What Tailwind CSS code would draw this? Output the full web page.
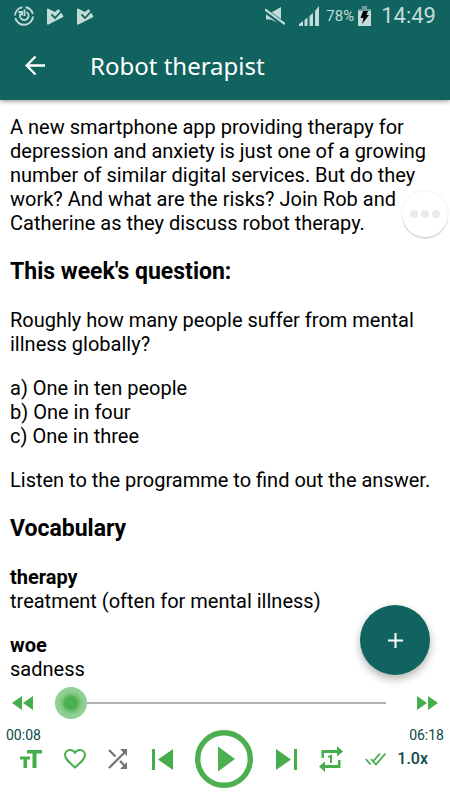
<!DOCTYPE html>
<html lang="en">
<head>
    <meta charset="UTF-8">
    <meta name="viewport" content="width=device-width, initial-scale=1.0">
    <title>Robot therapist</title>
    <script src="https://cdn.jsdelivr.net/npm/@tailwindcss/browser@4"></script>
</head>
<body class="relative flex h-screen flex-col overflow-hidden bg-white font-['Roboto',sans-serif] text-black">

    <header class="relative z-10 bg-[#11635f] pb-3 shadow-[0_1px_5px_rgba(0,0,0,0.45)]">
        <!-- Status bar -->
        <div class="flex h-8 items-center justify-between pr-[14px] pl-[14px] text-[#c3dbd8]">
            <div class="flex items-center gap-[13px]">
                <svg class="size-[20px]" viewBox="0 0 20 20" fill="none" stroke="currentColor" stroke-width="1.9">
                    <path d="M11.500 1.200A9 9 0 0 1 18.800 8M19 10.500A9 9 0 0 1 1.300 12M1 9.500A9 9 0 0 1 8.500 1.200"/>
                    <path d="M12.500 6A4.300 4.300 0 1 1 6.500 7.500M4.500 6H8v3.500M10.500 3.500V10"/>
                </svg>
                <svg class="h-[17px] w-[17px]" viewBox="0 0 17 17">
                    <path fill="currentColor" d="M0 1.500Q0 0 1.500.7L8 4l3.500-3L13 3l3 4.500Q17 8.500 15.800 9.300L1.500 16.500Q0 17 0 15.500z"/>
                    <path fill="none" stroke="#11635f" stroke-width="1.800" d="M4.500 6.500L8 10l7-7.500"/>
                </svg>
                <svg class="h-[17px] w-[17px]" viewBox="0 0 17 17">
                    <path fill="currentColor" d="M0 1.500Q0 0 1.500.7L8 4l3.500-3L13 3l3 4.500Q17 8.500 15.800 9.300L1.500 16.500Q0 17 0 15.500z"/>
                    <path fill="none" stroke="#11635f" stroke-width="1.800" d="M4.500 6.500L8 10l7-7.500"/>
                </svg>
            </div>
            <div class="flex items-center">
                <svg class="mr-[14px] h-[19px] w-[20px]" viewBox="0 0 20 19">
                    <path fill="currentColor" d="M1 6h4.500L16 0v17L5.500 12.500H1z"/>
                    <path stroke="#11635f" stroke-width="5" d="M0 3.500L20 18"/>
                    <path stroke="currentColor" stroke-width="2.200" d="M0 2.500L20 17"/>
                </svg>
                <svg class="mr-[7px] h-5 w-5" viewBox="0 0 20 20" fill="currentColor">
                    <path d="M0 20v-2l4-3v5zM5.500 20v-6l3-2.500V20zM10.500 20V10l3.500-3v13zM16 20V5l4-5v20z"/>
                </svg>
                <span class="mr-1 text-[15px]">78%</span>
                <svg class="mr-[10px] h-5 w-[13px]" viewBox="0 0 13 20">
                    <path fill="#6a9c98" d="M4 0h5v3h4v3H0V3h4z"/>
                    <path fill="currentColor" d="M0 5h13v15H0z"/>
                    <path fill="#000" d="M5 5h5L8.500 9H11L4 18l1.500-6H2.500z"/>
                </svg>
                <span class="text-[22px] leading-8">14:49</span>
            </div>
        </div>
        <!-- App bar -->
        <div class="flex h-14 items-center gap-[44px] pt-[11px] pl-[25px] text-white">
            <button type="button" aria-label="Back">
                <svg class="size-[21px]" viewBox="0 0 21 21" fill="none" stroke="currentColor" stroke-width="2.400">
                    <path d="M20 10.500H2M10.500 1.500L1.700 10.500l8.800 9"/>
                </svg>
            </button>
            <h1 class="font-['Noto_Sans',sans-serif] text-[24px] leading-8">Robot therapist</h1>
        </div>
    </header>

    <main class="flex-1 overflow-hidden px-[10px] pt-[15px] text-[20px] leading-6">
        <p>A new smartphone app providing therapy for depression and anxiety is just one of a growing number of similar digital services. But do they work? And what are the risks? Join Rob and Catherine as they discuss robot therapy.</p>
        <h2 class="mt-[21px] mb-5 text-[23px] leading-8 font-bold">This week's question:</h2>
        <p>Roughly how many people suffer from mental illness globally?</p>
        <p class="mt-5">a) One in ten people<br>b) One in four<br>c) One in three</p>
        <p class="mt-5">Listen to the programme to find out the answer.</p>
        <h2 class="mt-[21px] mb-5 text-[23px] leading-8 font-bold">Vocabulary</h2>
        <p><strong>therapy</strong><br>treatment (often for mental illness)</p>
        <p class="mt-5"><strong>woe</strong><br>sadness</p>
    </main>

    <!-- Floating buttons -->
    <button type="button" aria-label="More" class="absolute top-[191px] right-[2px] z-10 flex size-[46px] items-center justify-center gap-[3px] rounded-full bg-white shadow-[0_2px_1px_rgba(0,0,0,0.12),0_0_2px_rgba(0,0,0,0.12)]">
        <span class="size-2 rounded-full bg-[#ebebeb]"></span>
        <span class="size-2 rounded-full bg-[#ebebeb]"></span>
        <span class="size-2 rounded-full bg-[#ebebeb]"></span>
    </button>
    <button type="button" aria-label="Add" class="absolute right-5 bottom-[125px] z-10 flex size-[70px] items-center justify-center rounded-full bg-[#11635f] text-white shadow-[0_4px_9px_rgba(0,0,0,0.3)]">
        <svg class="size-[15px]" viewBox="0 0 15 15" stroke="currentColor" stroke-width="2"><path d="M7.500 0v15M0 7.500h15"/></svg>
    </button>

    <!-- Player -->
    <footer class="pb-3 text-[#45ad4c]">
        <div class="flex items-center gap-[15px] px-3">
            <button type="button" aria-label="Rewind">
                <svg class="h-[14px] w-[21px]" viewBox="0 0 21 14" fill="currentColor"><path d="M10 0v14L0 7zM21 0v14L11 7z"/></svg>
            </button>
            <input type="range" min="0" max="378" value="8" aria-label="Position" class="h-8 min-w-0 flex-1 appearance-none bg-[linear-gradient(#b2b2b2,#b2b2b2)] bg-[length:calc(100%-32px)_2px] bg-center bg-no-repeat [&::-webkit-slider-thumb]:size-8 [&::-webkit-slider-thumb]:appearance-none [&::-webkit-slider-thumb]:rounded-full [&::-webkit-slider-thumb]:bg-[radial-gradient(circle,#4caf50_0_6px,#6dbf70_8px,#8fcf92_12px)]">
            <button type="button" aria-label="Fast forward">
                <svg class="h-[14px] w-[21px]" viewBox="0 0 21 14" fill="currentColor"><path d="M0 0v14l10-7zM11 0v14l10-7z"/></svg>
            </button>
        </div>
        <div class="mt-2 flex h-4 items-center justify-between px-[6px] text-[14px] text-[#0b4a46]">
            <span>00:08</span>
            <span>06:18</span>
        </div>
        <div class="-mt-[13px] flex items-center justify-between pr-[22px] pl-5">
            <button type="button" aria-label="Text size">
                <svg class="h-[18px] w-[22px]" viewBox="0 0 22 18" fill="currentColor"><path d="M7 0h15v3.500h-5.500V18h-4V3.500H7zM0 6.500h10V9.500H7V18H3.500V9.500H0z"/></svg>
            </button>
            <button type="button" aria-label="Favourite">
                <svg class="h-5 w-[22px]" viewBox="0 0 22 20" fill="none" stroke="currentColor" stroke-width="2"><path d="M11 18.500C5 13.200 1 9.800 1 6a5 5 0 0 1 5-5c2 0 3.900 1 5 2.700C12.100 2 14 1 16 1a5 5 0 0 1 5 5c0 3.800-4 7.200-10 12.500z"/></svg>
            </button>
            <button type="button" aria-label="Shuffle" class="text-[#757575]">
                <svg class="size-5" viewBox="0 0 20 20"><path fill="none" stroke="currentColor" stroke-width="2.300" d="M1 1l6.500 6.500M1 19L17 3M12 12l5 5"/><path fill="currentColor" d="M12 0h7v7zM19 13v7h-7z"/></svg>
            </button>
            <button type="button" aria-label="Previous">
                <svg class="h-[21px] w-[22px]" viewBox="0 0 22 21" fill="currentColor"><path d="M1 0h3v21H1zM22 0v21L7 10.500z"/></svg>
            </button>
            <button type="button" aria-label="Play">
                <svg class="size-[58px]" viewBox="0 0 58 58"><circle cx="29" cy="29" r="26.300" fill="none" stroke="#4caf50" stroke-width="5.400"/><path fill="#4caf50" d="M23 16.500v25L40 29z"/></svg>
            </button>
            <button type="button" aria-label="Next">
                <svg class="h-[21px] w-[22px]" viewBox="0 0 22 21" fill="currentColor"><path d="M19 0h3v21h-3zM1 0v21l15-10.500z"/></svg>
            </button>
            <button type="button" aria-label="Repeat one">
                <svg class="h-[26px] w-6" viewBox="0 0 24 26" fill="currentColor"><path d="M2.500 12V4H18V0l6 5.500-6 5V7H5v5zM21.500 14v8H6v4l-6-5.500 6-5V19h13v-5zM11 17v-5.800l-2 .6V10l3.500-1.200H13V17z"/></svg>
            </button>
            <div class="flex items-center gap-[11px]">
                <button type="button" aria-label="Mark as done">
                    <svg class="h-[14px] w-[21px]" viewBox="0 0 21 14" fill="none" stroke="currentColor" stroke-width="1.800"><path d="M.7 7l5 5.500M6 7l5 5.500L20.500 1.500M8.500 9L15 1.500"/></svg>
                </button>
                <button type="button" class="text-[16px] leading-5 font-medium text-[#0b4a46]">1.0x</button>
            </div>
        </div>
    </footer>
</body>
</html>
